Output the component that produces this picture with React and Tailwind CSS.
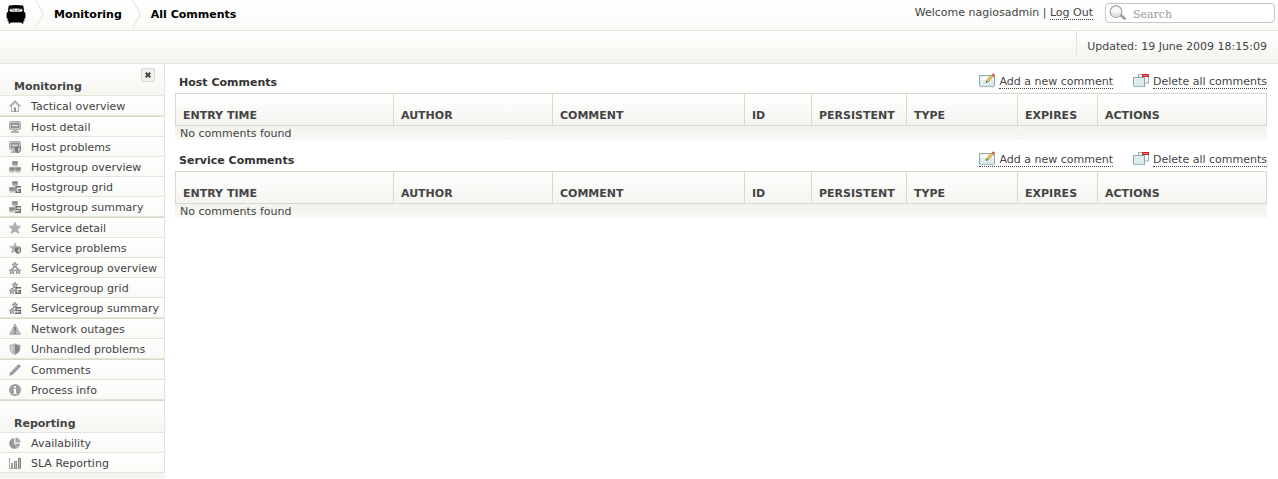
import React, { useState } from 'react';

// Sidebar sections, every inner array is a block with a thicker line below it
const sections = [
  {
    title: 'Monitoring',
    closable: true,
    blocks: [
      [{ label: 'Tactical overview', icon: 'home' }],
      [
        { label: 'Host detail', icon: 'host' },
        { label: 'Host problems', icon: 'hostProblem' },
        { label: 'Hostgroup overview', icon: 'hostgroup' },
        { label: 'Hostgroup grid', icon: 'hostgroupGrid' },
        { label: 'Hostgroup summary', icon: 'hostgroupSummary' },
      ],
      [
        { label: 'Service detail', icon: 'service' },
        { label: 'Service problems', icon: 'serviceProblem' },
        { label: 'Servicegroup overview', icon: 'servicegroup' },
        { label: 'Servicegroup grid', icon: 'servicegroupGrid' },
        { label: 'Servicegroup summary', icon: 'servicegroupSummary' },
      ],
      [
        { label: 'Network outages', icon: 'outage' },
        { label: 'Unhandled problems', icon: 'shield' },
      ],
      [
        { label: 'Comments', icon: 'pencil' },
        { label: 'Process info', icon: 'info' },
      ],
    ],
  },
  {
    title: 'Reporting',
    blocks: [
      [
        { label: 'Availability', icon: 'pie' },
        { label: 'SLA Reporting', icon: 'bars' },
      ],
    ],
  },
];

const columns = [
  { name: 'Entry time', width: 'w-[218px]' },
  { name: 'Author', width: 'w-[159px]' },
  { name: 'Comment', width: 'w-[192px]' },
  { name: 'ID', width: 'w-[67px]' },
  { name: 'Persistent', width: 'w-[95px]' },
  { name: 'Type', width: 'w-[111px]' },
  { name: 'Expires', width: 'w-[80px]' },
  { name: 'Actions', width: '' },
];

const STAR = 'M6 0L7.6 4L12 4.4L8.7 7.2L9.8 11.6L6 9.2L2.2 11.6L3.3 7.2L0 4.4L4.4 4Z';

const MiniHost = ({ x, y }) => (
  <g transform={`translate(${x} ${y})`}>
    <rect width="6" height="4" rx="0.8" fill="#a2a2a2" />
    <rect x="1" y="1" width="4" height="1.4" fill="#858585" />
    <rect x="0.5" y="4" width="5" height="1.6" fill="#c2c2c2" />
  </g>
);

const MiniStar = ({ x, y }) => (
  <path d={STAR} transform={`translate(${x} ${y}) scale(0.5)`} fill="#b4b4b4" stroke="#8a8a8a" strokeWidth="1.6" />
);

const HostGroup = () => (
  <g>
    <MiniHost x={3} y={0} />
    <MiniHost x={0} y={6} />
    <MiniHost x={6} y={6} />
  </g>
);

const ServiceGroup = () => (
  <g>
    <path d="M6 5L3 8M6 5L9 8" stroke="#9a9a9a" />
    <MiniStar x={3} y={0} />
    <MiniStar x={0} y={6} />
    <MiniStar x={6} y={6} />
  </g>
);

const Monitor = () => (
  <g>
    <rect x="0.5" y="0.5" width="11" height="8" rx="1" fill="#c4c4c4" stroke="#ababab" />
    <rect x="2.5" y="2.5" width="7" height="4" fill="#a8a8a8" stroke="#8a8a8a" />
    <path d="M3 4.5H9" stroke="#d8d8d8" />
    <path d="M4 9H8V10H10V12H2V10H4Z" fill="#b0b0b0" />
  </g>
);

const SmallShield = () => (
  <g>
    <path d="M6 5.5H12V9C12 10.6 10.6 11.6 9 12C7.4 11.6 6 10.6 6 9Z" fill="#777777" />
    <path d="M9 6.5H11V9C11 10 10 10.7 9 11Z" fill="#c4c4c4" />
  </g>
);

const LetterG = () => (
  <g>
    <rect x="6" y="5" width="6" height="7" fill="#f3f3f0" />
    <path d="M12 5.7H7V11.3H11.4V8.8H9" fill="none" stroke="#6c6c6c" strokeWidth="1.4" />
  </g>
);

const LetterS = () => (
  <g>
    <rect x="6" y="5" width="6" height="7" fill="#f3f3f0" />
    <path d="M12 5.7H7V8.5H11.4V11.3H6" fill="none" stroke="#6c6c6c" strokeWidth="1.4" />
  </g>
);

const icons = {
  home: (
    <g>
      <path d="M2.5 6V11.5H9.5V6L6 2.5Z" fill="#f4f4f4" stroke="#b0b0b0" />
      <path d="M0.5 6.5L6 1L11.5 6.5" fill="none" stroke="#9a9a9a" strokeWidth="1.2" />
      <path d="M5 7.5H7V11.5H5Z" fill="#8c8c8c" />
    </g>
  ),
  host: <Monitor />,
  hostProblem: <g><Monitor /><SmallShield /></g>,
  hostgroup: <HostGroup />,
  hostgroupGrid: <g><HostGroup /><LetterG /></g>,
  hostgroupSummary: <g><HostGroup /><LetterS /></g>,
  service: <path d={STAR} fill="#b0b0b0" stroke="#a2a2a2" strokeWidth="0.6" />,
  serviceProblem: <g><path d={STAR} fill="#b0b0b0" /><SmallShield /></g>,
  servicegroup: <ServiceGroup />,
  servicegroupGrid: <g><ServiceGroup /><LetterG /></g>,
  servicegroupSummary: <g><ServiceGroup /><LetterS /></g>,
  outage: (
    <g>
      <path d="M6 1L11.3 11.3H0.7Z" fill="#b8b8b8" stroke="#acacac" strokeLinejoin="round" />
      <path d="M6 4V8M6 9V10.5" stroke="#6c6c6c" strokeWidth="1.4" />
    </g>
  ),
  shield: (
    <g>
      <path d="M0.5 1.5C3 1.5 4.5 1 6 0C7.5 1 9 1.5 11.5 1.5V6C11.5 9 9 11 6 12C3 11 0.5 9 0.5 6Z" fill="#bdbdbd" />
      <path d="M6 1C7.5 2 9 2.3 10.5 2.4V6C10.5 8.5 8.5 10 6 11Z" fill="#858585" />
      <path d="M3 3V8" stroke="#e0e0e0" />
    </g>
  ),
  pencil: (
    <g>
      <path d="M0.3 11.7L1.5 8.3L9 0.8C10.2 -0.2 12.2 1.8 11.2 3L3.7 10.5Z" fill="#8d8d8d" />
      <path d="M2.5 8.8L9.7 1.8" stroke="#c9c9c9" />
    </g>
  ),
  info: (
    <g>
      <circle cx="6" cy="6" r="6" fill="#9f9f9f" />
      <path d="M5 2.2H7V4H5ZM4.5 5H7V9H7.8V10H4.3V9H5V6H4.5Z" fill="#ffffff" />
    </g>
  ),
  pie: (
    <g>
      <path d="M5.2 1V6.8H11A5.4 5.4 0 1 1 5.2 1Z" fill="#989898" />
      <path d="M6.4 0.6A5 5 0 0 1 11.4 5.6H6.4Z" fill="#a8a8a8" />
      <path d="M5.5 7L9 10.8" stroke="#e4e4e4" />
    </g>
  ),
  bars: (
    <g>
      <path d="M0.5 1V11.5H12" fill="none" stroke="#a8a8a8" />
      <rect x="2" y="6" width="2" height="5" fill="#9a9a9a" />
      <rect x="5" y="4" width="3" height="7" fill="#8c8c8c" />
      <rect x="6" y="5" width="1" height="6" fill="#b8b8b8" />
      <rect x="9" y="1" width="3" height="10" fill="#858585" />
      <rect x="10" y="2" width="1" height="9" fill="#b8b8b8" />
    </g>
  ),
};

const Logo = () => (
  <svg viewBox="0 0 20 20" className="h-5 w-5" aria-hidden="true">
    <path
      d="M3 1.6Q10 0.2 17 1.6Q17.8 3 18 8Q19.6 8 19.4 10V13.6Q19.4 14.6 18.4 14.4V17H17.4V19.6H15.6V18.4H4.4V19.6H2.6V17H1.6V14.4Q0.6 14.6 0.6 13.6V10Q0.4 8 2 8Q2.2 3 3 1.6Z"
      fill="#000000"
    />
    <path d="M5 4.8Q10 4.2 15 4.8Q16.8 5 16.6 6.4Q16.4 7.8 14.6 7.8H5.4Q3.6 7.8 3.4 6.4Q3.2 5 5 4.8Z" fill="#efefef" />
    <path d="M5 5L9 6.6M15 5L11 6.6" stroke="#555555" strokeWidth="0.8" fill="none" />
  </svg>
);

const Chevron = () => (
  <svg viewBox="0 0 10 28" className="h-7 w-[10px]" aria-hidden="true">
    <path d="M0.5 0L8.5 14L0.5 27.5" fill="none" stroke="#e2e2da" />
  </svg>
);

const Note = () => (
  <g>
    <path d="M0.5 2.5H15.5V13L13.5 14L12 13L10.5 14L8.5 13L6.5 14L4.5 13L2.5 14L0.5 13Z" fill="#dcecec" stroke="#8fa9ab" />
    <path d="M1.5 3.5H14.5V7H1.5Z" fill="#f6fbfb" />
  </g>
);

const AddIcon = () => (
  <svg viewBox="0 0 16 15" className="h-[15px] w-4" aria-hidden="true">
    <Note />
    <path d="M7 9.5L7.8 7L13 1.6L14.8 3.2L9.4 8.6Z" fill="#e9c94f" stroke="#8b7430" strokeWidth="0.6" />
    <path d="M12.8 1.8L14.4 0.2L16 1.8L14.6 3.4Z" fill="#e0484b" />
    <path d="M7 9.6L7.5 8L8.6 9Z" fill="#222222" />
  </svg>
);

const DeleteIcon = () => (
  <svg viewBox="0 0 16 15" className="h-[15px] w-4" aria-hidden="true">
    <path d="M5.5 1.5H15.5V10.5L14 9.5L12 10.5H5.5Z" fill="#eef5f5" stroke="#9fb5b7" />
    <path d="M0.5 4.5H11.5V14L10 13L8.5 14L7 13L5.5 14L4 13L2 14L0.5 13Z" fill="#dcebec" stroke="#8fa9ab" />
    <rect x="9" y="1" width="7" height="3" fill="#cf2026" />
    <path d="M10 2.5H15" stroke="#f07377" />
  </svg>
);

const Header = () => {
  const [query, setQuery] = useState('');

  return (
    <header>
      <div className="flex h-[31px] items-start justify-between border-b border-[#e6e6d8] bg-gradient-to-b from-white to-[#fafaf7] pr-[3px] pl-[6px]">
        <nav className="flex items-start font-bold text-black" aria-label="Breadcrumb">
          <a href="#home" className="mt-1 mr-[9px]" aria-label="Home"><Logo /></a>
          <Chevron />
          <a href="#monitoring" className="mr-[10px] ml-[9px] leading-[30px]">Monitoring</a>
          <Chevron />
          <span className="ml-[9px] leading-[30px]">All Comments</span>
        </nav>
        <div className="flex items-start">
          <p className="mt-[5px] mr-3 leading-4">
            Welcome nagiosadmin |{' '}
            <a href="#logout" className="inline-block h-[15px] border-b border-dotted border-[#444444] leading-4">Log Out</a>
          </p>
          <label className="mt-[3px] flex h-5 w-[170px] items-center gap-[6px] rounded-[4px] border border-[#c6c6c6] bg-white pl-[3px]">
            <svg viewBox="0 0 18 16" className="h-4 w-[18px] shrink-0" aria-hidden="true">
              <path d="M11.5 10L16.5 14.2" stroke="#9b9b9b" strokeWidth="2.6" />
              <circle cx="7" cy="6.5" r="5.8" fill="#f6f6f6" stroke="#a6a6a6" strokeWidth="1.3" />
              <path d="M3.6 8A4 4 0 0 0 10 8.8" fill="none" stroke="#c4c4c4" />
            </svg>
            <input
              type="text"
              aria-label="Search"
              placeholder="Search"
              value={query}
              onChange={(e) => setQuery(e.target.value)}
              className="h-full w-full min-w-0 bg-transparent pt-[2px] font-['DejaVu_Serif',serif] text-[11px] outline-none placeholder:text-[#999999]"
            />
          </label>
        </div>
      </div>
      <div className="flex h-[33px] justify-end border-b border-[#e4e4da] bg-gradient-to-b from-white to-[#f3f4ee] pr-[11px]">
        <p className="h-6 border-l border-[#e4e4da] pl-[10px] leading-8">Updated: 19 June 2009 18:15:09</p>
      </div>
    </header>
  );
};

const Sidebar = () => (
  <aside className="w-[165px] shrink-0 bg-[#f4f5ef]">
    {sections.map((section) => (
      <section key={section.title} className="border-r border-[#e4e5d8]">
        <div className="flex h-8 justify-between border-b border-[#e4e5d8] bg-gradient-to-b from-white to-[#f5f6f1] pr-[9px] pl-[14px]">
          <h2 className="pt-[15px] leading-4 font-bold">{section.title}</h2>
          {section.closable && (
            <button type="button" aria-label="Hide menu" className="mt-1 flex h-[14px] w-[14px] items-center justify-center rounded-[2px] border border-[#dadad4] bg-[#efefeb]">
              <svg viewBox="0 0 6 6" className="h-[6px] w-[6px]" aria-hidden="true">
                <path d="M0.7 0.7L5.3 5.3M5.3 0.7L0.7 5.3" stroke="#444444" strokeWidth="2" />
              </svg>
            </button>
          )}
        </div>
        {section.blocks.map((block, i) => (
          <ul key={i} className={section.closable ? 'border-b border-[#d9dac8]' : ''}>
            {block.map((item) => (
              <li key={item.label} className="h-5 border-b border-[#e4e5d8] bg-gradient-to-b from-white to-[#f9f9f6]">
                <a href={`#${item.icon}`} className="flex h-full items-start gap-[10px] pl-[9px] whitespace-nowrap">
                  <svg viewBox="0 0 12 12" className="mt-1 h-3 w-3 shrink-0" aria-hidden="true">{icons[item.icon]}</svg>
                  <span className="mt-[3px] leading-4">{item.label}</span>
                </a>
              </li>
            ))}
          </ul>
        ))}
      </section>
    ))}
  </aside>
);

const CommentTable = ({ title, underlineIcon }) => (
  <section className="h-[78px]">
    <div className="flex h-[22px] items-start justify-between pl-1">
      <h2 className="pt-1 leading-4 font-bold text-[#333333]">{title}</h2>
      <div className="flex gap-5">
        <a href="#add" className={`flex h-[18px] items-start gap-1 border-[#444444] border-dotted ${underlineIcon ? 'border-b' : ''}`}>
          <span className="pt-[2px]"><AddIcon /></span>
          <span className={`h-[18px] border-[#444444] border-dotted pt-[3px] leading-4 ${underlineIcon ? '' : 'border-b'}`}>Add a new comment</span>
        </a>
        <a href="#delete" className="flex h-[18px] items-start gap-1">
          <span className="pt-[2px]"><DeleteIcon /></span>
          <span className="h-[18px] border-b border-dotted border-[#444444] pt-[3px] leading-4">Delete all comments</span>
        </a>
      </div>
    </div>
    <table className="w-full table-fixed border-separate border-spacing-0">
      <thead>
        <tr>
          {columns.map((col) => (
            <th
              key={col.name}
              scope="col"
              className={`h-[33px] border-y border-l border-[#d8d9c6] bg-gradient-to-b from-white to-[#f4f5f0] p-0 pt-[13px] pl-[7px] text-left leading-4 font-bold uppercase last:border-r ${col.width}`}
            >
              {col.name}
            </th>
          ))}
        </tr>
      </thead>
      <tbody>
        <tr>
          <td colSpan={columns.length} className="h-[14px] bg-gradient-to-b from-[#f2f3ec] to-[#f8f8f4] p-0 pl-[5px] leading-[14px]">
            <span className="block h-[14px] leading-4">No comments found</span>
          </td>
        </tr>
      </tbody>
    </table>
  </section>
);

const App = () => {
  return (
    <div className="flex min-h-screen flex-col bg-white font-['DejaVu_Sans',sans-serif] text-[11px] text-[#444444]">
      <Header />
      <div className="flex flex-1">
        <Sidebar />
        <main className="min-w-0 flex-1 pt-[7px] pr-[11px] pl-[10px]">
          <CommentTable title="Host Comments" />
          <CommentTable title="Service Comments" underlineIcon />
        </main>
      </div>
    </div>
  );
};

export default App;
